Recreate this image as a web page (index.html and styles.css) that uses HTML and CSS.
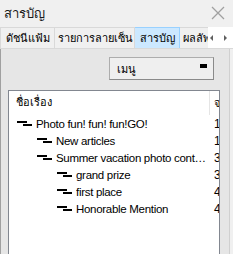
FILE: index.html
```html
<!DOCTYPE html>
<html>
<head>
<meta charset="utf-8">
<link rel="stylesheet" href="styles.css">
</head>
<body>
<div class="win">
  <div class="titlebar">
    <span class="title">สารบัญ</span>
    <svg class="close" width="14" height="14" viewBox="0 0 14 14"><path d="M1 1L13 13M13 1L1 13" stroke="#a0a0a0" stroke-width="1.3"/></svg>
  </div>
  <div class="tabs">
    <div class="tab t1">ดัชนีแฟ้ม</div>
    <div class="tab t2">รายการลายเซ็น</div>
    <div class="tab t3 sel">สารบัญ</div>
    <div class="tab t4">ผลลัพธ์</div>
    <div class="arrows">
      <svg width="6" height="8" viewBox="0 0 6 8"><path d="M4 1L1 4L4 7Z" fill="#606060"/></svg>
      <svg width="6" height="8" viewBox="0 0 6 8"><path d="M2 1L5 4L2 7Z" fill="#606060"/></svg>
    </div>
  </div>
  <div class="panel">
    <div class="btnrow">
      <div class="menubtn"><span>เมนู</span><i class="mark"></i></div>
    </div>
    <div class="list">
      <div class="hdr">
        <div class="c1">ชื่อเรื่อง</div>
        <div class="c2">จ</div>
      </div>
      <div class="row l0"><div class="c1"><i class="ico"></i><span class="txt">Photo fun! fun! fun!GO!</span></div><span class="c2">1</span></div>
      <div class="row l1"><div class="c1"><i class="ico"></i><span class="txt">New articles</span></div><span class="c2">1</span></div>
      <div class="row l1"><div class="c1"><i class="ico"></i><span class="txt">Summer vacation photo contest</span></div><span class="c2">3</span></div>
      <div class="row l2"><div class="c1"><i class="ico"></i><span class="txt">grand prize</span></div><span class="c2">3</span></div>
      <div class="row l2"><div class="c1"><i class="ico"></i><span class="txt">first place</span></div><span class="c2">4</span></div>
      <div class="row l2"><div class="c1"><i class="ico"></i><span class="txt">Honorable Mention</span></div><span class="c2">4</span></div>
    </div>
  </div>
</div>
</body>
</html>
```

FILE: styles.css
```css
html, body {
  margin: 0;
  padding: 0;
  width: 233px;
  height: 254px;
  overflow: hidden;
  background: #f0f0f0;
}
.win {
  width: 233px;
  height: 254px;
  display: flex;
  flex-direction: column;
  font-family: "Liberation Sans", Tahoma, sans-serif;
  font-size: 11px;
  color: #000;
}
.titlebar {
  height: 26px;
  display: flex;
  align-items: center;
  justify-content: space-between;
  padding: 0 8px 0 4px;
  background: #f0f0f0;
  flex: none;
}
.title {
  font-size: 13px;
  color: #1a1a1a;
}
.close { display: block; }
.tabs {
  height: 21px;
  margin-top: 1px;
  display: flex;
  flex: none;
  border-bottom: 1px solid #d9d9d9;
  background: #f0f0f0;
  overflow: hidden;
}
.tab {
  flex: none;
  box-sizing: border-box;
  height: 21px;
  line-height: 20px;
  border: 1px solid #d9d9d9;
  border-bottom: none;
  border-left: none;
  background: #f0f0f0;
  padding: 0 3px;
  text-align: center;
  white-space: nowrap;
  overflow: hidden;
  font-size: 11px;
}
.t1 { width: 55px; border-left: 1px solid #d9d9d9; }
.t2 { width: 80px; }
.t3 { width: 45px; }
.t4 { width: 28px; border-right: none; padding-right: 0; text-align: left; }
.tab.sel {
  background: #cce8ff;
  border-color: #99d1ff;
}
.arrows {
  flex: 1;
  display: flex;
  align-items: center;
  gap: 7px;
  padding-left: 1px;
  background: #fff;
}
.arrows svg { display: block; }
.panel {
  flex: 1;
  margin-right: 3px;
  border-left: 1px solid #a0a0a0;
  border-right: 1px solid #d0d0d0;
  background: #e6e6e6;
  padding: 8px 8px 0 7px;
  display: flex;
  flex-direction: column;
  min-height: 0;
}
.btnrow {
  display: flex;
  justify-content: flex-end;
  height: 23px;
  padding-right: 7px;
}
.menubtn {
  box-sizing: border-box;
  width: 105px;
  height: 23px;
  background: #efefef;
  border: 1px solid #adadad;
  border-right-color: #8a8a8a;
  border-bottom-color: #8a8a8a;
  display: flex;
  align-items: center;
  justify-content: space-between;
  padding: 0 6px 0 7px;
  font-size: 11px;
}
.mark {
  display: block;
  width: 7px;
  height: 4px;
  background: #000;
  margin-top: -5px;
}
.list {
  margin-top: 10px;
  flex: 1;
  background: #fff;
  border: 1px solid #828790;
  border-bottom: none;
  overflow: hidden;
  margin-right: 1px;
}
.hdr {
  display: flex;
  height: 24px;
  align-items: center;
}
.hdr .c1 {
  width: 201px;
  flex: none;
  padding-left: 7px;
  box-sizing: border-box;
  font-size: 11px;
  height: 24px;
  line-height: 22px;
  border-right: 1px solid #e5e5e5;
}
.hdr .c2 {
  padding-left: 4px;
  font-size: 11px;
}
.row {
  display: flex;
  align-items: center;
  height: 17px;
  white-space: nowrap;
}
.row .c1 {
  flex: none;
  width: 201px;
  box-sizing: border-box;
  display: flex;
  align-items: center;
  padding-right: 2px;
}
.row .txt {
  flex: 1;
  min-width: 0;
  overflow: hidden;
  text-overflow: ellipsis;
  font-size: 11.5px;
  letter-spacing: -0.3px;
}
.row .ico {
  flex: none;
  display: block;
  width: 16px;
  height: 6px;
  position: relative;
  margin-right: 3px;
}
.row .ico::before {
  content: "";
  position: absolute;
  left: 0;
  top: 0;
  width: 10px;
  height: 2px;
  background: #000;
}
.row .ico::after {
  content: "";
  position: absolute;
  left: 6px;
  top: 3px;
  width: 9px;
  height: 2px;
  background: #000;
}
.row .c2 { padding-left: 4px; font-size: 12px; }
.l0 .c1 { padding-left: 8px; }
.l1 .c1 { padding-left: 28px; }
.l2 .c1 { padding-left: 48px; }
```
